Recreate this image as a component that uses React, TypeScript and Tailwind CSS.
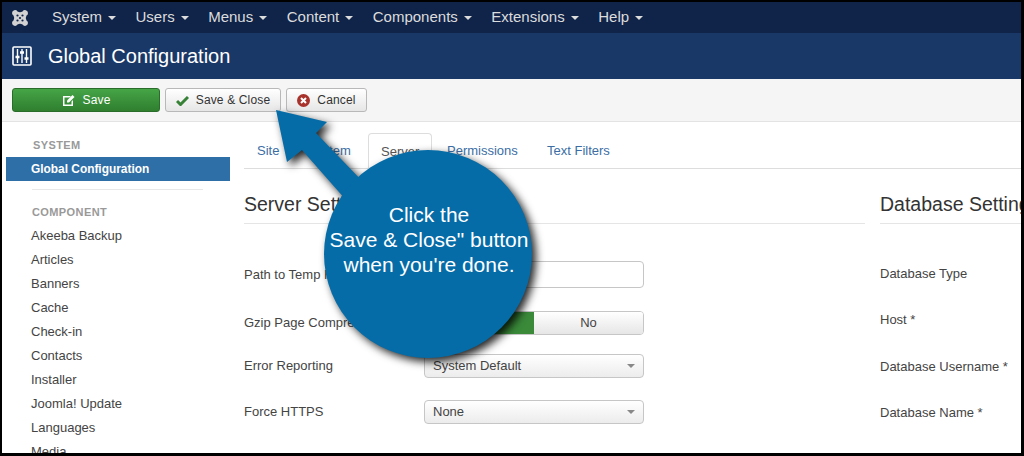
import React from 'react'

const navItems = ['System', 'Users', 'Menus', 'Content', 'Components', 'Extensions', 'Help']
const sideItems = ['Akeeba Backup', 'Articles', 'Banners', 'Cache', 'Check-in', 'Contacts', 'Installer', 'Joomla! Update', 'Languages', 'Media']
const dbLabels = ['Database Type', 'Host *', 'Database Username *', 'Database Name *', 'Database Tables Prefix *']

function Caret({ className }: { className: string }) {
  return <span className={`inline-block w-0 h-0 border-x-[4px] border-x-transparent border-t-[4px] ${className}`} />
}

function JoomlaLogo() {
  return (
    <svg width="18" height="18" viewBox="0 0 18 18" className="text-[#d2d2d2]">
      <path
        d="M1 4a3 3 0 0 1 5.500-1.500Q9 4 11.500 2.500A3 3 0 0 1 17 4q0 2-1.500 2.500Q14 9 15.500 11.500A3 3 0 0 1 17 14a3 3 0 0 1-5.500 1.500Q9 14 6.500 15.500A3 3 0 0 1 1 14q0-2 1.500-2.500Q4 9 2.500 6.500A3 3 0 0 1 1 4z"
        fill="currentColor"
      />
      <g fill="#10244a">
        <circle cx="6.500" cy="6.500" r="1.100" />
        <circle cx="11.500" cy="6.500" r="1.100" />
        <circle cx="6.500" cy="11.500" r="1.100" />
        <circle cx="11.500" cy="11.500" r="1.100" />
        <circle cx="9" cy="9" r="1.100" />
      </g>
    </svg>
  )
}

function ConfigIcon() {
  return (
    <svg width="20" height="20" viewBox="0 0 20 20" fill="none" stroke="white">
      <rect x="1" y="1" width="18" height="18" rx="1" strokeWidth="1.6" />
      <path d="M5.500 3v14M10 3v14M14.500 3v14" strokeWidth="1.400" />
      <path d="M3.500 11h4M8 6.500h4M12.500 12.500h4" strokeWidth="2.400" />
    </svg>
  )
}

function Toolbar() {
  const btn =
    'h-[24px] flex items-center justify-center gap-[7px] rounded-[3px] border border-[#b8b8b8] bg-gradient-to-b from-white to-[#e6e6e6] text-[12px] tracking-[0.15px] text-[#333]'
  return (
    <div className="h-[43px] flex items-center gap-[5px] pl-[10px] bg-[#f5f5f5] border-b border-[#e3e3e3]">
      <button className="w-[148px] h-[24px] flex items-center justify-center gap-[7px] rounded-[3px] border border-[#2a6c2a] bg-gradient-to-b from-[#46a546] to-[#2f7f2f] text-[12px] tracking-[0.15px] text-white">
        <svg width="14" height="13" viewBox="0 0 14 13">
          <path d="M1 2h8L7.500 3.500H2.500v7h7V7.500L11 6v6H1z" fill="white" />
          <path d="M5 6.500L10.500 1 12.500 3 7 8.500H5z" fill="white" />
        </svg>
        Save
      </button>
      <button className={`${btn} w-[116px]`}>
        <svg width="13" height="11" viewBox="0 0 13 11">
          <path d="M1 6l3.500 3.500L12 2" fill="none" stroke="#378137" strokeWidth="3" />
        </svg>
        Save &amp; Close
      </button>
      <button className={`${btn} w-[81px]`}>
        <svg width="13" height="13" viewBox="0 0 13 13">
          <circle cx="6.500" cy="6.500" r="6.500" fill="#a8322c" />
          <path d="M4 4l5 5M9 4l-5 5" stroke="white" strokeWidth="2" />
        </svg>
        Cancel
      </button>
    </div>
  )
}

function Sidebar() {
  return (
    <aside className="w-[228px] shrink-0 pl-[4px] text-[13px]">
      <div className="pl-[27px] pt-[17px] h-[35px] text-[11px] leading-[13px] font-bold tracking-[0.4px] text-[#999]">SYSTEM</div>
      <div className="h-[24px] pl-[25px] pt-[1px] flex items-center bg-[#2f6fa8] text-white text-[11.900px] font-bold">Global Configuration</div>
      <div className="ml-[26px] mr-[27px] mt-[8px] border-t border-[#e8e8e8]" />
      <div className="pl-[26px] pt-[16px] h-[34px] text-[11px] leading-[13px] font-bold tracking-[0.4px] text-[#999]">COMPONENT</div>
      {sideItems.map((item) => (
        <div key={item} className="h-[24px] pl-[25px] leading-[24px] text-[#444]">
          {item}
        </div>
      ))}
    </aside>
  )
}

function Tabs() {
  return (
    <div className="flex h-[47px] items-end border-b border-[#ddd] text-[13px] text-[#3c6ea5]">
      <div className="w-[124px] h-[36px] pl-[13px] flex gap-[28px] leading-[37px]">
        <span>Site</span>
        <span>System</span>
      </div>
      <div className="w-[64px] h-[36px] -mb-px bg-white border border-b-white border-[#ddd] rounded-t-[4px] pl-[12px] leading-[35px] text-[#555]">Server</div>
      <div className="w-[115px] pl-[15px] h-[36px] leading-[37px]">Permissions</div>
      <div className="h-[36px] leading-[37px]">Text Filters</div>
    </div>
  )
}

function ServerForm() {
  const field = 'w-[220px] ml-auto border border-[#c6c6c6] rounded-[4px] text-[13px]'
  const row = 'flex items-center text-[13px] text-[#444]'
  const select =
    'h-[24px] pl-[8px] pr-[8px] flex items-center justify-between bg-gradient-to-b from-white to-[#ececec] border-[#aaa] text-[#444]'
  return (
    <div className="w-[621px] shrink-0">
      <h3 className="h-[55px] pt-[23px] text-[19.500px] leading-[24px] text-[#333] border-b border-[#e5e5e5]">Server Settings</h3>
      <div className={`${row} h-[27px] mt-[37px]`}>
        <span>Path to Temp Folder *</span>
        <div className={`${field} h-[27px] mr-[221px]`} />
      </div>
      <div className={`${row} h-[24px] mt-[23px]`}>
        <span>Gzip Page Compression</span>
        <div className={`${field} h-[24px] mr-[221px] flex overflow-hidden`}>
          <div className="w-[109px] bg-[#3a8a3a] text-white flex items-center justify-center">Yes</div>
          <div className="flex-1 bg-gradient-to-b from-white to-[#e6e6e6] flex items-center justify-center">No</div>
        </div>
      </div>
      <div className={`${row} h-[24px] mt-[19px]`}>
        <span>Error Reporting</span>
        <div className={`${field} ${select} mr-[221px]`}>
          System Default
          <Caret className="border-t-[#888]" />
        </div>
      </div>
      <div className={`${row} h-[24px] mt-[22px]`}>
        <span>Force HTTPS</span>
        <div className={`${field} ${select} mr-[221px]`}>
          None
          <Caret className="border-t-[#888]" />
        </div>
      </div>
    </div>
  )
}

function DatabaseForm() {
  return (
    <div className="ml-[15px] flex-1 min-w-0">
      <h3 className="h-[55px] pt-[23px] text-[19.500px] leading-[24px] text-[#333] border-b border-[#e5e5e5] whitespace-nowrap overflow-hidden">Database Settings</h3>
      <div className="pt-[37px] flex flex-col gap-[21.300px] text-[13px] leading-[25px] text-[#444] whitespace-nowrap">
        {dbLabels.map((label) => (
          <div key={label} className="h-[25px]">
            {label}
          </div>
        ))}
      </div>
    </div>
  )
}

function Callout() {
  return (
    <div className="absolute left-[270px] top-[105px] w-[270px] h-[260px]">
      <svg width="270" height="260" viewBox="0 0 270 260" className="drop-shadow-[4px_4px_4px_rgba(0,0,0,0.85)]">
        <path d="M6 5L57 17 46 28 95 79 76 95 32 45 17 57z" fill="#056ca8" />
        <circle cx="158" cy="149" r="104" fill="#056ca8" />
      </svg>
      <div className="absolute left-[55px] top-[97px] w-[208px] text-center text-[21px] leading-[25px] text-white whitespace-nowrap">
        Click the
        <br />
        Save &amp; Close" button
        <br />
        when you're done.
      </div>
    </div>
  )
}

export default function App() {
  return (
    <div className="relative w-[1024px] h-[456px] overflow-hidden bg-black pt-[2px] pl-[2px] pr-[3px] pb-[3px] font-['Liberation_Sans',Arial,sans-serif]">
      <div className="h-full bg-white overflow-hidden">
        <nav className="h-[31px] flex items-center pl-[9px] bg-[#10244a] text-[15px] text-[#dcdcdc]">
          <JoomlaLogo />
          <div className="flex ml-[23px] gap-[19.500px]">
            {navItems.map((item) => (
              <span key={item} className="flex items-center gap-[6px]">
                {item}
                <Caret className="border-t-[#dcdcdc]" />
              </span>
            ))}
          </div>
        </nav>
        <header className="h-[46px] flex items-center pl-[10px] gap-[16px] bg-[#1a3867] text-white text-[20px]">
          <ConfigIcon />
          <h1>Global Configuration</h1>
        </header>
        <Toolbar />
        <div className="flex">
          <Sidebar />
          <main className="flex-1 min-w-0 pl-[14px]">
            <Tabs />
            <div className="flex">
              <ServerForm />
              <DatabaseForm />
            </div>
          </main>
        </div>
      </div>
      <Callout />
    </div>
  )
}
